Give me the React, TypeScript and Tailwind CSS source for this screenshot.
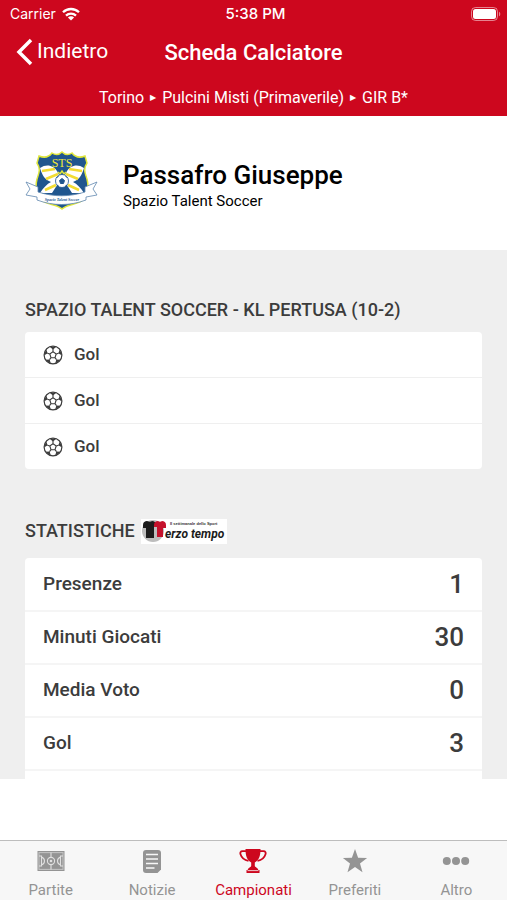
const events = ['Gol', 'Gol', 'Gol']

const stats = [
  { label: 'Presenze', value: 1 },
  { label: 'Minuti Giocati', value: 30 },
  { label: 'Media Voto', value: 0 },
  { label: 'Gol', value: 3 },
]

const tabs = [
  { label: 'Partite', icon: <PitchIcon /> },
  { label: 'Notizie', icon: <NewsIcon /> },
  { label: 'Campionati', icon: <TrophyIcon />, active: true },
  { label: 'Preferiti', icon: <StarIcon /> },
  { label: 'Altro', icon: <DotsIcon /> },
]

function WifiIcon() {
  return (
    <svg width="18" height="14" viewBox="0 0 18 14" fill="none" stroke="white" strokeWidth="2.3" aria-hidden="true">
      <path d="M1 5.3a11.4 11.4 0 0 1 16 0" />
      <path d="M4 8.6a7.2 7.2 0 0 1 10 0" />
      <path d="M9 13.6 5.9 10.6a4.4 4.4 0 0 1 6.2 0z" fill="white" stroke="none" />
    </svg>
  )
}

function BatteryIcon() {
  return (
    <svg width="30" height="14" viewBox="0 0 30 14" aria-hidden="true">
      <rect x="0.5" y="0.5" width="26" height="13" rx="4" fill="none" stroke="white" strokeOpacity="0.5" />
      <rect x="2" y="2" width="23" height="10" rx="2.5" fill="white" />
      <path d="M28 4.7c1.7.6 1.7 4 0 4.6z" fill="white" fillOpacity="0.5" />
    </svg>
  )
}

function BallIcon() {
  return (
    <svg width="20" height="20" viewBox="0 0 20 20" className="text-[#3c3c3c]" aria-hidden="true">
      <circle cx="10" cy="10" r="8.9" fill="none" stroke="currentColor" strokeWidth="1.2" />
      <path
        d="M10 6.6 13.2 9 12 12.7H8L6.800 9z M10 6.6V4 M13.2 9l2.400-.8 M12 12.700l1.500 2 M8 12.700l-1.500 2 M6.800 9l-2.400-.8"
        fill="none"
        stroke="currentColor"
        strokeWidth="1.1"
        strokeLinejoin="round"
      />
      <path
        d="M6.6 1.7 10 4.400 13.4 1.7z M16.9 4.2 15.3 8.2 19 10.6z M17.6 14.8 13.3 14.6 12.2 18.7z M2.4 14.8 6.7 14.6 7.8 18.7z M3.1 4.2 4.7 8.2 1 10.6z"
        fill="currentColor"
      />
    </svg>
  )
}

function PitchIcon() {
  return (
    <svg width="28" height="22" viewBox="0 0 28 22" aria-hidden="true">
      <rect x="0.5" y="1" width="27" height="20" fill="#949494" />
      <g fill="none" stroke="#e0e0e0" strokeWidth="1.1">
        <rect x="2" y="2.6" width="24" height="16.8" strokeOpacity="0.6" />
        <path d="M14 2.6v5M14 14.4v5M2 6h2.5v10H2M26 6h-2.5v10H26M4.5 7c4 1.6 4 6.4 0 8M23.5 7c-4 1.6-4 6.4 0 8" />
        <circle cx="14" cy="11" r="3.6" />
      </g>
      <circle cx="14" cy="11" r="1.3" fill="#e0e0e0" />
    </svg>
  )
}

function NewsIcon() {
  return (
    <svg width="18" height="23" viewBox="0 0 18 23" aria-hidden="true">
      <path d="M3 0h12a3 3 0 0 1 3 3v16.500L14.500 23H3a3 3 0 0 1-3-3V3a3 3 0 0 1 3-3z" fill="#949494" />
      <path d="M3 4.5h12M3 9h12M3 13.5h12M3 18h8.5" stroke="#f7f7f7" strokeWidth="1.7" />
    </svg>
  )
}

function TrophyIcon() {
  return (
    <svg width="28" height="24" viewBox="0 0 28 24" aria-hidden="true">
      <path
        d="M6.5 0h15c0 7-1.5 11-5.7 13.5v3.3c0 1.7 3 1.5 3.5 4.2h1.2v3h-13v-3h1.2c.5-2.700 3.5-2.500 3.5-4.200v-3.300C8 11 6.5 7 6.5 0z"
        fill="#cd071e"
      />
      <path d="M8.5 21.6h11" stroke="#f7f7f7" strokeWidth="0.8" />
      <path
        d="M7 2.200H3.500C1.500 2.200 1 3.600 1.500 5.200c1 3.400 3.400 5.800 8 6.600M21 2.200h3.500c2 0 2.500 1.400 2 3-1 3.400-3.400 5.800-8 6.600"
        fill="none"
        stroke="#cd071e"
        strokeWidth="1.8"
      />
    </svg>
  )
}

function StarIcon() {
  return (
    <svg width="26" height="24" viewBox="0 0 26 24" aria-hidden="true">
      <path d="M13 0l3.100 8.700 9 .2-7.100 5.600 2.500 8.800L13 18.100l-7.500 5.200L8 14.500.9 8.900l9-.2z" fill="#949494" />
    </svg>
  )
}

function DotsIcon() {
  return (
    <svg width="28" height="8" viewBox="0 0 28 8" fill="#949494" aria-hidden="true">
      <circle cx="4.8" cy="4" r="4" />
      <circle cx="14" cy="4" r="4" />
      <circle cx="23.2" cy="4" r="4" />
    </svg>
  )
}

function ClubCrest() {
  return (
    <svg width="73" height="59" viewBox="0 0 73 59" role="img" aria-label="Spazio Talent Soccer">
      <path
        d="M37 1c3 3 7 3 10 1 3 4 8 5 13 3l2 7c-4 6-2 10 0 16 2 8 0 16-4 21-6 5-16 4-21 9-5-5-15-4-21-9-4-5-6-13-4-21 2-6 4-10 0-16l2-7c5 2 10 1 13-3 3 2 7 2 10-1z"
        fill="#20568e"
        stroke="#dfe63c"
        strokeWidth="1.5"
      />
      <path d="M15 17c7-5 14-2 17 3l4 8-9 14H15c3-5 7-9 11-11-6-2-9-7-11-14z" fill="white" />
      <path d="M59 17c-7-5-14-2-17 3l-4 8 9 14h12c-3-5-7-9-11-11 6-2 9-7 11-14z" fill="white" />
      <path d="M17 20l13-2M21 28l12-5M20 39l11-5M57 20l-13-2M53 28l-12-5M54 39l-11-5" stroke="#f2dc32" strokeWidth="2.5" />
      <path d="M33 21l2 2 2-3 2 3 2-2" fill="none" stroke="#dfe63c" strokeWidth="1.5" />
      <circle cx="37" cy="30" r="6.5" fill="white" stroke="#20568e" strokeWidth="0.8" />
      <path
        d="M37 27.500l2.500 2-1 3h-3l-1-3zM31.500 27l2-2M42.500 27l-2-2M32 34l2 1.500M42 34l-2 1.500"
        fill="#20568e"
        stroke="#20568e"
        strokeWidth="1"
      />
      <path
        d="M1 31l12 5v5c16 5 31 5 47 0v-5l12-5-4 7 4 6-11 2v3c-16 6-33 6-49 0v-3L1 44l4-6z"
        fill="white"
        stroke="#5f86ae"
        strokeWidth="0.8"
      />
      <text
        x="37"
        y="50"
        textAnchor="middle"
        className="font-['Liberation_Serif',serif] text-[4px] italic"
        fill="#20568e"
        fontWeight="700"
      >
        Spazio Talent Soccer
      </text>
      <text x="37" y="16" textAnchor="middle" className="font-['Liberation_Serif',serif] text-[12px]" fill="#f0e838">
        STS
      </text>
    </svg>
  )
}

function SponsorLogo() {
  return (
    <svg width="86" height="25" viewBox="0 0 86 25" role="img" aria-label="Terzo tempo">
      <rect width="86" height="25" fill="white" />
      <circle cx="12" cy="12" r="11" fill="#bdbdbd" />
      <path d="M2 9V6c0-3 2-4 4-4 2 1 4 1 5 0 2 0 4 1 4 4v2h-2v11H5V9z" fill="#1c1c1c" />
      <path d="M13 8V6c0-3 2-4 4-4 1 1 3 1 4 0 2 0 4 1 4 4v3h-3v9h-6V8z" fill="#c4122c" />
      <text x="29" y="6" className="font-['Liberation_Sans',sans-serif] text-[4px]" fontWeight="700" fill="#333">
        Il settimanale dello Sport
      </text>
      <text x="24" y="19" className="font-['Roboto',sans-serif] text-[12px] italic" fontWeight="700" fill="#1c1c1c">
        erzo tempo
      </text>
    </svg>
  )
}

export default function App() {
  return (
    <div className="flex h-screen flex-col bg-white font-['Roboto',sans-serif] text-[#3c3c3c]">
      <header className="shrink-0 bg-[#cd071e] text-white">
        <div className="grid h-7 grid-cols-3 items-center pr-1.5 pl-2.5 font-['Inter',sans-serif] text-sm">
          <div className="flex items-center gap-1.5">
            <span>Carrier</span>
            <WifiIcon />
          </div>
          <span className="text-center text-[15px] font-medium">5:38 PM</span>
          <div className="flex justify-end">
            <BatteryIcon />
          </div>
        </div>

        <div className="grid h-12 grid-cols-[1fr_auto_1fr] items-center px-4">
          <button className="flex items-center gap-1 text-[21px]">
            <svg width="17" height="28" viewBox="0 0 17 28" fill="none" stroke="white" strokeWidth="3.5" aria-hidden="true">
              <path d="M15 2 3 14l12 12" />
            </svg>
            Indietro
          </button>
          <h1 className="text-[22px] font-medium">Scheda Calciatore</h1>
        </div>

        <nav className="flex h-10 items-center justify-center gap-1.5 pt-1 text-base">
          <span>Torino</span>
          <span className="text-[8px]">▶</span>
          <span>Pulcini Misti (Primaverile)</span>
          <span className="text-[8px]">▶</span>
          <span>GIR B*</span>
        </nav>
      </header>

      <main className="min-h-0 flex-1 overflow-hidden bg-[#efefef]">
        <section className="flex h-[134px] items-start gap-[25px] bg-white px-[25px] pt-[35px]">
          <ClubCrest />
          <div className="pt-2 text-black">
            <h2 className="text-[26px] leading-8 font-medium">Passafro Giuseppe</h2>
            <p className="text-[15px] leading-5">Spazio Talent Soccer</p>
          </div>
        </section>

        <section className="px-[25px] pt-12">
          <h3 className="text-lg leading-6 font-medium">SPAZIO TALENT SOCCER - KL PERTUSA (10-2)</h3>
          <ul className="mt-[10px] divide-y divide-[#efefef] rounded bg-white">
            {events.map((event, index) => (
              <li key={index} className="box-content flex h-[45px] items-center gap-[11px] px-[18px] text-[17px] font-medium">
                <BallIcon />
                {event}
              </li>
            ))}
          </ul>
        </section>

        <section className="px-[25px] pt-12">
          <div className="flex items-center gap-1.5">
            <h3 className="text-lg leading-7 font-medium">STATISTICHE</h3>
            <SponsorLogo />
          </div>
          <table className="mt-[13px] w-full rounded bg-white">
            <tbody>
              {stats.map((stat) => (
                <tr key={stat.label} className="h-[53px] border-b-2 border-[#f5f5f5]">
                  <th scope="row" className="pl-[18px] text-left text-[19px] font-medium">{stat.label}</th>
                  <td className="pr-[18px] text-right text-[26px] font-medium">{stat.value}</td>
                </tr>
              ))}
              <tr className="h-[53px]">
                <td colSpan={2}></td>
              </tr>
            </tbody>
          </table>
        </section>
      </main>

      <footer className="shrink-0 pt-[61px]">
        <nav className="grid grid-cols-5 border-t border-[#bdbdbd] bg-[#f7f7f7]">
          {tabs.map((tab) => (
            <a
              key={tab.label}
              href="#"
              className={`flex h-[59px] flex-col items-center text-[15px] leading-[18px] ${tab.active ? 'text-[#cd071e]' : 'text-[#949494]'}`}
            >
              <span className="flex h-10 items-center">{tab.icon}</span>
              {tab.label}
            </a>
          ))}
        </nav>
      </footer>
    </div>
  )
}
